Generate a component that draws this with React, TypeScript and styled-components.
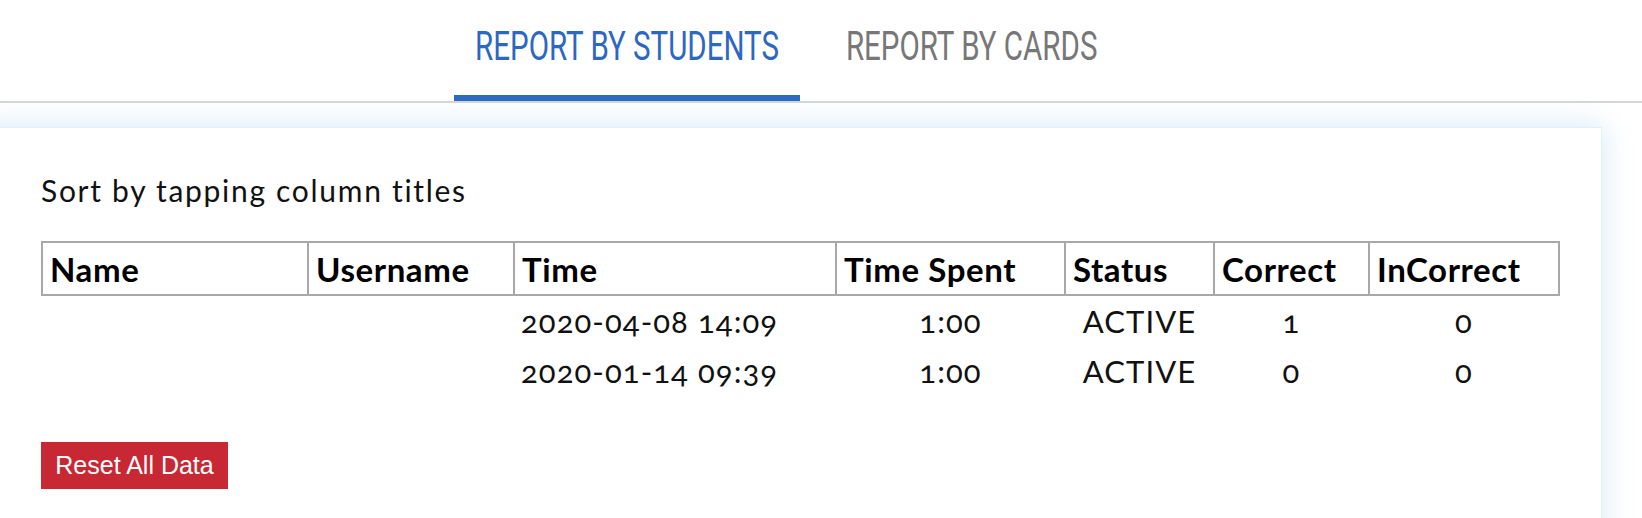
import React from 'react';
import styled, { createGlobalStyle } from 'styled-components';

const COLORS = {
  blue: '#2c67c1',
  gray: '#777777',
  divider: '#d6d6d6',
  tableBorder: '#a8a8a8',
  text: '#111111',
  red: '#c72834',
};

const BODY_FONT = `Lato, 'Open Sans', sans-serif`;
// no condensed face is installed, so Roboto is squeezed horizontally
const TAB_FONT = `Roboto, 'Liberation Sans', sans-serif`;

const GlobalStyle = createGlobalStyle`
  html, body {
    margin: 0;
    padding: 0;
    background: #ffffff;
    overflow: hidden;
  }
  body {
    font-family: ${BODY_FONT};
    color: ${COLORS.text};
  }
`;

const Page = styled.div`
  width: 1642px;
  height: 518px;
  overflow: hidden;
`;

const TabBar = styled.nav`
  display: flex;
  align-items: flex-end;
  height: 101px;
  padding-left: 454px;
  gap: 23px;
  border-bottom: 2px solid ${COLORS.divider};
`;

const Tab = styled.button<{ $active?: boolean; $width: number }>`
  display: flex;
  align-items: flex-start;
  justify-content: center;
  box-sizing: border-box;
  width: ${({ $width }) => $width}px;
  height: 101px;
  padding: 24px 0 0;
  margin: 0;
  border: none;
  background: transparent;
  border-bottom: 6px solid ${({ $active }) => ($active ? COLORS.blue : 'transparent')};
  color: ${({ $active }) => ($active ? COLORS.blue : COLORS.gray)};
  cursor: pointer;
`;

const TabLabel = styled.span`
  display: inline-block;
  font-family: ${TAB_FONT};
  font-size: 41px;
  line-height: 44px;
  font-weight: 400;
  white-space: nowrap;
  transform: scaleX(0.72);
  transform-origin: center;
`;

const Card = styled.section`
  box-sizing: border-box;
  width: 1622px;
  height: 440px;
  margin: 24px 0 0 -20px;
  padding: 45px 0 0 60px;
  background: #ffffff;
  border: 1px solid #e2f0fb;
  box-shadow: 0 0 28px rgba(110, 175, 230, 0.3);
`;

const Hint = styled.p`
  margin: 0 0 34px;
  font-family: ${BODY_FONT};
  font-size: 30px;
  line-height: 34px;
  font-weight: 400;
  letter-spacing: 1.7px;
  color: ${COLORS.text};
`;

const Table = styled.table`
  border-collapse: collapse;
  table-layout: fixed;
  width: 1517px;
  font-family: ${BODY_FONT};
`;

const HeadCell = styled.th<{ $width: number }>`
  width: ${({ $width }) => $width}px;
  height: 53px;
  box-sizing: border-box;
  padding: 1px 7px 0;
  border: 2px solid ${COLORS.tableBorder};
  text-align: left;
  vertical-align: middle;
  font-size: 33px;
  line-height: 40px;
  font-weight: 700;
  letter-spacing: 0.6px;
  color: #000000;
  white-space: nowrap;
  overflow: hidden;
`;

const Cell = styled.td<{ $align?: 'left' | 'center' }>`
  height: 50px;
  padding: 0 7px;
  text-align: ${({ $align }) => $align ?? 'center'};
  vertical-align: middle;
  font-size: 31px;
  line-height: 40px;
  font-weight: 400;
  letter-spacing: 1.1px;
  font-variant-numeric: oldstyle-nums;
  color: ${COLORS.text};
  white-space: nowrap;
`;

const ResetButton = styled.button`
  display: block;
  margin-top: 46px;
  width: 187px;
  height: 47px;
  padding: 0;
  border: none;
  background: ${COLORS.red};
  color: #ffffff;
  font-family: 'Liberation Sans', Arial, sans-serif;
  font-size: 25px;
  cursor: pointer;
`;

const TABS = [
  { label: 'REPORT BY STUDENTS', width: 346, active: true },
  { label: 'REPORT BY CARDS', width: 297, active: false },
];

const COLUMNS = [
  { title: 'Name', width: 266 },
  { title: 'Username', width: 206 },
  { title: 'Time', width: 322 },
  { title: 'Time Spent', width: 229 },
  { title: 'Status', width: 149 },
  { title: 'Correct', width: 155 },
  { title: 'InCorrect', width: 190 },
];

const ROWS = [
  { name: '', username: '', time: '2020-04-08 14:09', spent: '1:00', status: 'ACTIVE', correct: 1, incorrect: 0 },
  { name: '', username: '', time: '2020-01-14 09:39', spent: '1:00', status: 'ACTIVE', correct: 0, incorrect: 0 },
];

export default function App() {
  return (
    <Page>
      <GlobalStyle />
      <TabBar>
        {TABS.map((tab) => (
          <Tab key={tab.label} $active={tab.active} $width={tab.width}>
            <TabLabel>{tab.label}</TabLabel>
          </Tab>
        ))}
      </TabBar>
      <Card>
        <Hint>Sort by tapping column titles</Hint>
        <Table>
          <thead>
            <tr>
              {COLUMNS.map((col) => (
                <HeadCell key={col.title} $width={col.width}>
                  {col.title}
                </HeadCell>
              ))}
            </tr>
          </thead>
          <tbody>
            {ROWS.map((row) => (
              <tr key={row.time}>
                <Cell $align="left">{row.name}</Cell>
                <Cell $align="left">{row.username}</Cell>
                <Cell $align="left">{row.time}</Cell>
                <Cell>{row.spent}</Cell>
                <Cell>{row.status}</Cell>
                <Cell>{row.correct}</Cell>
                <Cell>{row.incorrect}</Cell>
              </tr>
            ))}
          </tbody>
        </Table>
        <ResetButton>Reset All Data</ResetButton>
      </Card>
    </Page>
  );
}
